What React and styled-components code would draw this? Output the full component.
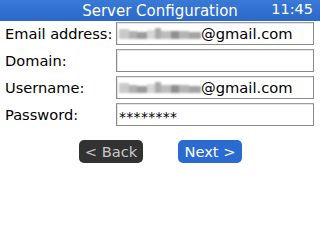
import React from 'react'
import styled, { createGlobalStyle } from 'styled-components'

const Global = createGlobalStyle`
  html, body {
    margin: 0;
    padding: 0;
    background: #fff;
  }
  body {
    font-family: 'DejaVu Sans', sans-serif;
  }
`

const Screen = styled.div`
  width: 320px;
  height: 240px;
  background: #fff;
  overflow: hidden;
`

const Header = styled.div`
  height: 21px;
  background: linear-gradient(#3a79d6, #2b68c8);
  color: #fff;
  font-size: 15px;
  display: flex;
  align-items: center;
  position: relative;
`

const Title = styled.div`
  flex: 1;
  text-align: center;
  padding-left: 0;
`

const Clock = styled.div`
  position: absolute;
  right: 7px;
  top: 1px;
  font-size: 14.5px;
`

const Form = styled.div`
  display: flex;
  flex-direction: column;
  gap: 4px;
  padding: 1px 6px 0 5px;
`

const Row = styled.div`
  display: flex;
  align-items: center;
  height: 23px;
`

const Label = styled.div`
  width: 111px;
  font-size: 14.6px;
  color: #000;
`

const Field = styled.div`
  flex: 1;
  height: 21px;
  border: 1px solid #8a8a8a;
  border-top-color: #9e9e9e;
  box-shadow: inset 1px 1px 0 #e4e4e4;
  display: flex;
  align-items: center;
  padding-left: 2px;
  font-size: 14.7px;
  color: #000;
`

const Blur = styled.span`
  display: inline-flex;
  width: 82px;
  height: 14px;
  filter: blur(1.2px);
`

const Block = styled.span`
  height: ${(p) => p.h}px;
  margin-top: ${(p) => p.t}px;
  width: ${(p) => p.w}px;
  background: ${(p) => p.c};
`

const Stars = styled.span`
  letter-spacing: 0.3px;
  font-size: 14px;
  position: relative;
  top: 2px;
`

const Buttons = styled.div`
  display: flex;
  justify-content: center;
  gap: 35px;
  margin-top: 14px;
  padding-left: 1px;
`

const Button = styled.div`
  width: 64px;
  height: 23px;
  border-radius: 5px;
  background: ${(p) => (p.primary ? '#2b6bd1' : '#323232')};
  color: ${(p) => (p.primary ? '#fff' : '#c8c8c8')};
  font-size: 14.7px;
  display: flex;
  align-items: center;
  justify-content: center;
`

const blurBlocks = [
  { w: 10, c: '#c9c9c9', t: 2, h: 10 },
  { w: 8, c: '#b0b0b0', t: 4, h: 8 },
  { w: 10, c: '#9a9a9a', t: 5, h: 7 },
  { w: 8, c: '#d6d6d6', t: 3, h: 9 },
  { w: 6, c: '#aaaaaa', t: 1, h: 11 },
  { w: 10, c: '#bdbdbd', t: 4, h: 8 },
  { w: 8, c: '#8f8f8f', t: 4, h: 8 },
  { w: 10, c: '#b4b4b4', t: 4, h: 8 },
  { w: 12, c: '#a4a4a4', t: 5, h: 7 },
]

function Hidden() {
  return (
    <Blur>
      {blurBlocks.map((b, i) => (
        <Block key={i} {...b} />
      ))}
    </Blur>
  )
}

export default function App() {
  return (
    <Screen>
      <Global />
      <Header>
        <Title>Server Configuration</Title>
        <Clock>11:45</Clock>
      </Header>
      <Form>
        <Row>
          <Label>Email address:</Label>
          <Field>
            <Hidden />
            @gmail.com
          </Field>
        </Row>
        <Row>
          <Label>Domain:</Label>
          <Field />
        </Row>
        <Row>
          <Label>Username:</Label>
          <Field>
            <Hidden />
            @gmail.com
          </Field>
        </Row>
        <Row>
          <Label>Password:</Label>
          <Field>
            <Stars>********</Stars>
          </Field>
        </Row>
      </Form>
      <Buttons>
        <Button>&lt; Back</Button>
        <Button primary>Next &gt;</Button>
      </Buttons>
    </Screen>
  )
}
